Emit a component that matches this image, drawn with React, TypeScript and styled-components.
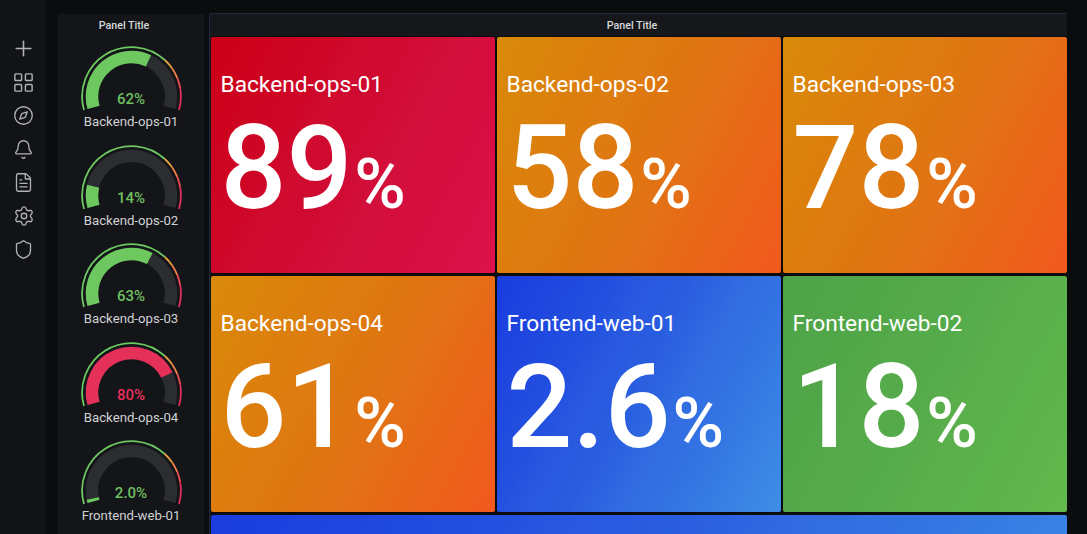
import React from "react";
import styled, { createGlobalStyle } from "styled-components";
import { Plus, LayoutGrid, Compass, Bell, FileText, Settings, Shield } from "lucide-react";

const GlobalStyle = createGlobalStyle`
  html, body {
    margin: 0;
    padding: 0;
    height: 100%;
    overflow: hidden;
    background: #0b0c0e;
    font-family: Roboto, "Liberation Sans", sans-serif;
  }
`;

const Page = styled.div`
  display: flex;
  width: 1087px;
  height: 534px;
  overflow: hidden;
  background: #0b0c0e;
`;

const Sidebar = styled.nav`
  flex: 0 0 46px;
  display: flex;
  flex-direction: column;
  align-items: center;
  padding: 32px 0 0 1px;
  background: #121317;
  color: #b0b2b7;
  box-sizing: border-box;
`;

const IconSlot = styled.span`
  display: flex;
  align-items: center;
  justify-content: center;
  height: 33.5px;
`;

const Content = styled.div`
  flex: 1;
  display: flex;
  gap: 5px;
  padding: 13px 20px 0 12px;
  min-width: 0;
`;

const GaugePanel = styled.section`
  flex: 0 0 146px;
  margin-top: 1px;
  background: #131519;
  overflow: hidden;
`;

const PanelTitle = styled.h2`
  margin: 0;
  padding-right: 14px;
  height: 23px;
  line-height: 23px;
  font-size: 10.7px;
  font-weight: 500;
  text-align: center;
  color: #d8d9da;
`;

const GaugeList = styled.div`
  display: flex;
  flex-direction: column;
  gap: 7.5px;
  padding-top: 9px;
`;

const GaugeCard = styled.div`
  position: relative;
  display: flex;
  flex-direction: column;
  align-items: center;
  height: 91px;
`;

const GaugeValue = styled.span<{ $color: string }>`
  position: absolute;
  top: 44px;
  left: 0;
  right: 0;
  text-align: center;
  font-size: 15px;
  font-weight: 500;
  line-height: 18px;
  color: ${({ $color }) => $color};
`;

const GaugeLabel = styled.span`
  margin-top: -1px;
  font-size: 13.2px;
  line-height: 18px;
  color: #d0d1d3;
  white-space: nowrap;
`;

const MainPanel = styled.section`
  flex: 1;
  min-width: 0;
  display: flex;
  flex-direction: column;
  background: #15171b;
  border-top: 1px solid #1d2a42;
  border-left: 1px solid #1d2a42;
  border-radius: 2px 2px 0 0;
  padding: 0 0 0 1px;
  box-sizing: border-box;
  overflow: hidden;
`;

const MainTitle = styled(PanelTitle)`
  height: 22px;
  line-height: 23px;
`;

const TileGrid = styled.div`
  display: grid;
  grid-template-columns: repeat(3, 284px);
  grid-auto-rows: 236px;
  column-gap: 2px;
  row-gap: 3px;
  padding-top: 1px;
  background: #0b0c0e;
`;

const gradients = {
  red: "linear-gradient(118deg, #cc0016 0%, #d00a33 50%, #dc124c 100%)",
  orange: "linear-gradient(118deg, #d98a0a 0%, #df7510 50%, #f2591e 100%)",
  blue: "linear-gradient(118deg, #1a3cdf 0%, #2a5fe0 50%, #3e8ee6 100%)",
  green: "linear-gradient(118deg, #4ea347 0%, #55ab49 50%, #63b94c 100%)",
};

type Tone = keyof typeof gradients;

const streaks =
  "linear-gradient(118deg, transparent 30%, rgba(255,255,255,0.015) 38%, transparent 46%, rgba(255,255,255,0.015) 62%, transparent 72%)";

const Tile = styled.article<{ $tone: Tone; $wide?: boolean }>`
  display: flex;
  flex-direction: column;
  padding: 34px 10px 0 9.5px;
  box-sizing: border-box;
  border-radius: 2px;
  color: #fff;
  background: ${streaks}, ${({ $tone }) => gradients[$tone]};
  overflow: hidden;
  grid-column: ${({ $wide }) => ($wide ? "1 / -1" : "auto")};
`;

const TileName = styled.div`
  font-size: 22.7px;
  line-height: 27px;
  white-space: nowrap;
`;

const TileValue = styled.div`
  display: flex;
  align-items: baseline;
  margin-top: 5px;
  font-size: 116px;
  line-height: 131px;
  font-weight: 500;
`;

const TileUnit = styled.span`
  margin-left: 2px;
  font-size: 70px;
  font-weight: 500;
`;

const START = 164;
const SWEEP = 212;
const CX = 50.5;
const CY = 50.5;

// angle runs clockwise from the lower left end of the dial
const polar = (r: number, fraction: number) => {
  const a = ((START + SWEEP * fraction) * Math.PI) / 180;
  return `${(CX + r * Math.cos(a)).toFixed(2)} ${(CY + r * Math.sin(a)).toFixed(2)}`;
};

const arc = (r: number, from: number, to: number) => {
  const large = SWEEP * (to - from) > 180 ? 1 : 0;
  return `M ${polar(r, from)} A ${r} ${r} 0 ${large} 1 ${polar(r, to)}`;
};

const ring: [number, number, string][] = [
  [0, 0.7, "#6fc962"],
  [0.7, 0.76, "#e8a33f"],
  [0.76, 0.82, "#f2804a"],
  [0.82, 0.88, "#ec4a55"],
  [0.88, 1, "#e02f5a"],
];

const Dial = ({ value, color }: { value: number; color: string }) => (
  <svg width="101" height="68" viewBox="0 0 101 68" fill="none">
    {ring.map(([from, to, stroke]) => (
      <path key={from} d={arc(49.4, from, to)} stroke={stroke} strokeWidth="1.8" />
    ))}
    <path d={arc(39.5, 0, 1)} stroke="#2c2d30" strokeWidth="12.5" />
    <path d={arc(39.5, 0, value)} stroke={color} strokeWidth="12.5" />
  </svg>
);

const GREEN = "#6cc85f";
const GREEN_TEXT = "#70bf60";
const RED = "#e5305a";

const gauges = [
  { name: "Backend-ops-01", text: "62%", value: 0.62, color: GREEN, textColor: GREEN_TEXT },
  { name: "Backend-ops-02", text: "14%", value: 0.14, color: GREEN, textColor: GREEN_TEXT },
  { name: "Backend-ops-03", text: "63%", value: 0.63, color: GREEN, textColor: GREEN_TEXT },
  { name: "Backend-ops-04", text: "80%", value: 0.8, color: RED, textColor: RED },
  { name: "Frontend-web-01", text: "2.0%", value: 0.02, color: GREEN, textColor: GREEN_TEXT },
];

const tiles: { name: string; value: string; tone: Tone }[] = [
  { name: "Backend-ops-01", value: "89", tone: "red" },
  { name: "Backend-ops-02", value: "58", tone: "orange" },
  { name: "Backend-ops-03", value: "78", tone: "orange" },
  { name: "Backend-ops-04", value: "61", tone: "orange" },
  { name: "Frontend-web-01", value: "2.6", tone: "blue" },
  { name: "Frontend-web-02", value: "18", tone: "green" },
];

const icons = [
  { Icon: Plus, size: 25 },
  { Icon: LayoutGrid, size: 23 },
  { Icon: Compass, size: 21 },
  { Icon: Bell, size: 21 },
  { Icon: FileText, size: 21 },
  { Icon: Settings, size: 22 },
  { Icon: Shield, size: 21 },
];

const App = () => {
  return (
    <Page>
      <GlobalStyle />
      <Sidebar>
        {icons.map(({ Icon, size }, i) => (
          <IconSlot key={i}>
            <Icon size={size} strokeWidth={1.5} />
          </IconSlot>
        ))}
      </Sidebar>
      <Content>
        <GaugePanel>
          <PanelTitle>Panel Title</PanelTitle>
          <GaugeList>
            {gauges.map((g) => (
              <GaugeCard key={g.name}>
                <Dial value={g.value} color={g.color} />
                <GaugeValue $color={g.textColor}>{g.text}</GaugeValue>
                <GaugeLabel>{g.name}</GaugeLabel>
              </GaugeCard>
            ))}
          </GaugeList>
        </GaugePanel>
        <MainPanel>
          <MainTitle>Panel Title</MainTitle>
          <TileGrid>
            {tiles.map((t) => (
              <Tile key={t.name} $tone={t.tone}>
                <TileName>{t.name}</TileName>
                <TileValue>
                  {t.value}
                  <TileUnit>%</TileUnit>
                </TileValue>
              </Tile>
            ))}
            <Tile $tone="blue" $wide />
          </TileGrid>
        </MainPanel>
      </Content>
    </Page>
  );
};

export default App;
